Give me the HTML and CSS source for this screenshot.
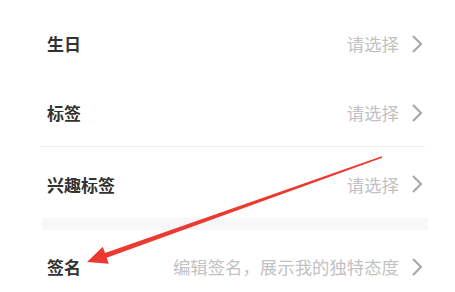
FILE: index.html
```html
<!DOCTYPE html>
<html lang="zh-CN">
<head>
<meta charset="utf-8">
<link rel="stylesheet" href="styles.css">
</head>
<body>
<div class="list">
  <div class="row r1">
    <span class="label">生日</span>
    <span class="value">请选择</span>
    <svg class="chev" viewBox="0 0 12 20" width="12" height="20"><polyline points="2,2 10,10 2,18" fill="none" stroke="#a9a9a9" stroke-width="2.2"/></svg>
  </div>
  <div class="row r2">
    <span class="label">标签</span>
    <span class="value">请选择</span>
    <svg class="chev" viewBox="0 0 12 20" width="12" height="20"><polyline points="2,2 10,10 2,18" fill="none" stroke="#a9a9a9" stroke-width="2.2"/></svg>
  </div>
  <div class="divider"></div>
  <div class="row r3">
    <span class="label">兴趣标签</span>
    <span class="value">请选择</span>
    <svg class="chev" viewBox="0 0 12 20" width="12" height="20"><polyline points="2,2 10,10 2,18" fill="none" stroke="#a9a9a9" stroke-width="2.2"/></svg>
  </div>
  <div class="band"></div>
  <div class="row r4">
    <span class="label">签名</span>
    <span class="value">编辑签名，展示我的独特态度</span>
    <svg class="chev" viewBox="0 0 12 20" width="12" height="20"><polyline points="2,2 10,10 2,18" fill="none" stroke="#a9a9a9" stroke-width="2.2"/></svg>
  </div>
</div>
<svg class="arrow" viewBox="0 0 455 292" width="455" height="292">
  <polygon fill="#ec3a30" points="382.3,157.8 381.7,156.2 105.0,252.9 102.8,246.8 87,262 108.8,263.8 106.6,257.7"/>
</svg>
</body>
</html>
```
FILE: styles.css
```css
html, body {
  margin: 0;
  padding: 0;
  background: #ffffff;
}
body {
  width: 455px;
  height: 292px;
  overflow: hidden;
  position: relative;
  font-family: "Noto Sans CJK SC", "Noto Sans", sans-serif;
}
.list {
  margin: 8px 27px 0 40px;
  display: flex;
  flex-direction: column;
}
.row {
  box-sizing: border-box;
  display: flex;
  align-items: center;
  padding: 3px 5px 0 7px;
}
.r1 { height: 68px; }
.r2 { height: 70px; }
.r3 { height: 71px; }
.r4 { height: 70px; }
.label {
  font-size: 17px;
  font-weight: 700;
  color: #333333;
  flex: 1;
}
.value {
  font-size: 17.4px;
  color: #c2c2c2;
  margin-right: 12px;
}
.chev {
  display: block;
  flex: none;
}
.divider {
  height: 1px;
  background: #f1f1f1;
  margin-right: 3px;
}
.band {
  height: 12px;
  background: #f7f7f7;
  margin-left: 2px;
}
.arrow {
  position: absolute;
  left: 0;
  top: 0;
}
```
